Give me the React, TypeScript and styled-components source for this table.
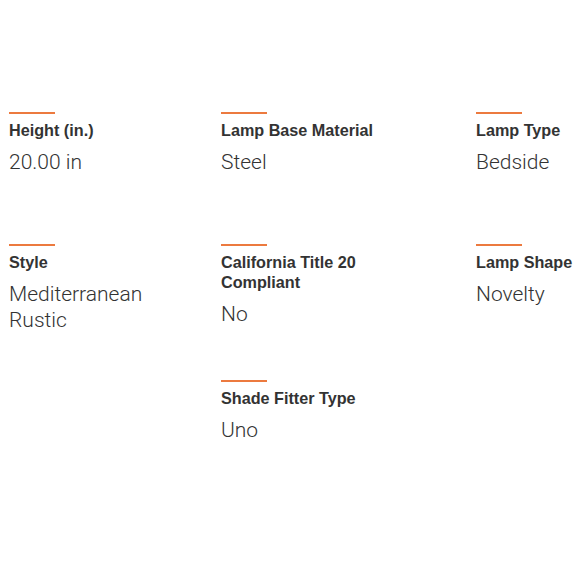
import React from 'react';
import styled, { createGlobalStyle } from 'styled-components';

const GlobalStyle = createGlobalStyle`
    html, body {
        margin: 0;
        padding: 0;
        background: #ffffff;
    }
`;

const Specs = styled.section`
    display: grid;
    grid-template-columns: 212px 255px 1fr;
    padding: 112px 0 0 9px;
    width: 580px;
    box-sizing: border-box;
`;

const Spec = styled.div`
    display: flex;
    flex-direction: column;
    min-height: 132px;
    padding-bottom: 47px;
    box-sizing: border-box;
`;

const Rule = styled.div`
    width: 46px;
    height: 2px;
    background: #ec7a3f;
    margin-bottom: 6px;
`;

const Label = styled.div`
    max-width: 200px;
    font-family: 'Liberation Sans', Arial, sans-serif;
    font-weight: 700;
    font-size: 16.2px;
    line-height: 20px;
    color: #333333;
    margin-bottom: 9px;
`;

const Value = styled.div`
    font-family: Roboto, 'Liberation Sans', sans-serif;
    font-weight: 300;
    font-size: 21px;
    line-height: 26px;
    color: #333333;
`;

type Item = { label: string; value: string[]; col?: number };

const items: Item[] = [
    { label: 'Height (in.)', value: ['20.00 in'] },
    { label: 'Lamp Base Material', value: ['Steel'] },
    { label: 'Lamp Type', value: ['Bedside'] },
    { label: 'Style', value: ['Mediterranean', 'Rustic'] },
    { label: 'California Title 20 Compliant', value: ['No'] },
    { label: 'Lamp Shape', value: ['Novelty'] },
    { label: 'Shade Fitter Type', value: ['Uno'], col: 2 },
];

const App: React.FC = () => {
    return (
        <>
            <GlobalStyle />
            <Specs>
                {items.map((item) => (
                    <Spec key={item.label} style={item.col ? { gridColumn: item.col } : undefined}>
                        <Rule />
                        <Label>{item.label}</Label>
                        <Value>
                            {item.value.map((v) => (
                                <div key={v}>{v}</div>
                            ))}
                        </Value>
                    </Spec>
                ))}
            </Specs>
        </>
    );
};

export default App;
